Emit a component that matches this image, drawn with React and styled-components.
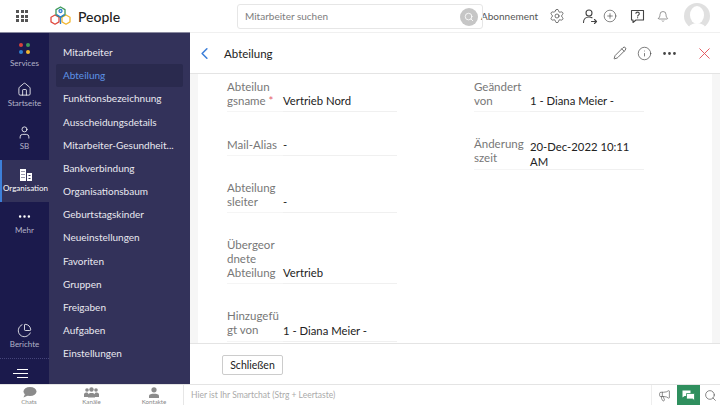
import React from "react";
import styled, { createGlobalStyle } from "styled-components";
import { Home, User, Settings, CirclePlus, Bell, Pencil, Info, Search, X, ChevronLeft, Ellipsis, Megaphone, PieChart } from "lucide-react";

const Global = createGlobalStyle`
  html, body { margin: 0; padding: 0; background: #fff; }
  * { box-sizing: border-box; }
  body { font-family: Lato, "Liberation Sans", sans-serif; }
`;
const Page = styled.div`width:720px;height:405px;display:flex;flex-direction:column;overflow:hidden;background:#fff;`;
const TopBar = styled.header`height:32px;flex:none;display:flex;align-items:center;background:#fff;`;
const GridBtn = styled.div`width:50px;flex:none;display:flex;justify-content:center;padding-right:6px;`;
const GridIcon = styled.div`display:grid;grid-template-columns:repeat(3,3px);grid-auto-rows:3px;gap:1.5px;`;
const GridDot = styled.span`background:#555;`;
const Brand = styled.div`width:187px;flex:none;display:flex;align-items:center;gap:7px;font-size:14px;font-weight:500;color:#222;`;
const SearchBox = styled.div`width:246px;height:25px;flex:none;position:relative;display:flex;align-items:center;padding-left:7px;border:1px solid #e6e6e6;border-radius:3px;font-size:10px;color:#7d7d7d;`;
const SearchDot = styled.span`position:absolute;right:4px;top:3px;width:18px;height:18px;border-radius:50%;background:#c6c6c6;display:flex;align-items:center;justify-content:center;color:#fff;`;
const Sub = styled.span`font-size:10px;color:#555;flex:none;width:56px;margin-left:-2px;white-space:nowrap;`;
const TopIcons = styled.div`display:flex;align-items:center;color:#444;`;
const TopIcon = styled.span`display:flex;flex:none;width:${p=>p.$w}px;justify-content:center;`;
const Avatar = styled.svg`width:26px;height:26px;margin-left:15px;flex:none;`;
const Body = styled.div`flex:1;display:flex;min-height:0;`;
const Rail = styled.nav`width:49px;flex:none;background:#1b1a4c;display:flex;flex-direction:column;box-shadow:inset 0 1px 0 #8a8aa0;`;
const RailItem = styled.div`height:${p=>p.$h||42.5}px;flex:none;display:flex;flex-direction:column;align-items:center;justify-content:center;gap:1px;font-size:8px;padding-top:${p=>p.$pt||0}px;padding-bottom:${p=>p.$pb||0}px;color:${p=>p.$active?"#fff":"#b3b3c8"};background:${p=>p.$active?"#33325a":"transparent"};border-left:${p=>p.$active?"2px solid #3d7fd9":"none"};`;
const RailBottom = styled.div`margin-top:auto;display:flex;flex-direction:column;`;
const Burger = styled.div`height:27px;border-top:1px dotted #45447a;display:flex;flex-direction:column;align-items:flex-end;justify-content:center;gap:2.5px;padding:3px 21px 0 0;`;
const BurgerLine = styled.span`height:1.5px;background:#fff;width:${p=>p.$w}px;`;
const Dots = styled.div`display:grid;grid-template-columns:4px 4px;gap:2.5px;margin-bottom:3px;`;
const Dot = styled.span`width:4px;height:4px;border-radius:50%;background:${p=>p.$c};`;
const Menu = styled.nav`width:141px;flex:none;background:#33325a;padding-top:8.4px;box-shadow:inset 0 1px 0 #8a8aa0;`;
const MenuItem = styled.div`height:23.2px;margin:0 7px;padding:0 0 0 7px;border-radius:2px;display:flex;align-items:center;font-size:10px;white-space:nowrap;color:${p=>p.$active?"#5d93e6":"#e9e9f0"};background:${p=>p.$active?"#2a2a4e":"transparent"};`;
const Main = styled.main`flex:1;display:flex;flex-direction:column;min-width:0;`;
const Head = styled.div`height:42px;flex:none;display:flex;align-items:center;border-bottom:1px solid #e4e4e4;border-top:1px solid #f0f0f0;color:#444;`;
const Back = styled.span`width:28px;flex:none;display:flex;justify-content:center;color:#3d7fd9;margin-right:6px;`;
const Title = styled.div`font-size:11.5px;color:#222;flex:1;`;
const HeadIcon = styled.span`display:flex;flex:none;width:${p=>p.$w}px;justify-content:center;color:#444;`;
const CloseIcon = styled.span`display:flex;flex:none;width:38px;justify-content:flex-end;padding-right:6px;`;
const Content = styled.div`flex:1;min-height:0;overflow:hidden;background:#fff;border-left:8px solid #f6f6f6;border-right:8px solid #f6f6f6;padding:6px 0 0 29px;display:grid;grid-template-columns:247px 1fr;`;
const Col = styled.div`display:flex;flex-direction:column;gap:24.7px;`;
const Row = styled.div`display:flex;align-items:flex-end;`;
const Label = styled.div`width:56px;flex:none;font-size:11.5px;line-height:14.2px;color:#777;padding-bottom:3px;border-bottom:1px solid #f5f5f5;`;
const Value = styled.div`width:114px;flex:none;font-size:11.3px;line-height:15px;color:#222;padding-bottom:${p=>p.$tight?0:3}px;border-bottom:1px solid #f0f0f0;`;
const Req = styled.span`color:#e4606d;`;
const Foot = styled.div`height:42px;flex:none;border-top:1px solid #e4e4e4;display:flex;align-items:center;padding-left:32px;`;
const CloseBtn = styled.button`width:61px;height:20px;padding:0;background:#fff;border:1px solid #ccc;border-radius:2px;font:10.5px Lato,sans-serif;color:#222;`;
const ChatBar = styled.footer`height:20px;flex:none;display:flex;align-items:center;background:#fff;box-shadow:0 -1px 0 #e4e4e4;`;
const Tabs = styled.div`width:184px;flex:none;display:flex;justify-content:center;height:100%;border-right:1px solid #e6e6e6;`;
const Tab = styled.div`width:62.5px;flex:none;display:flex;flex-direction:column;align-items:center;justify-content:flex-end;font-size:6.2px;line-height:7px;color:#888;`;
const TabGlyph = styled.span`display:flex;height:12px;align-items:center;color:#888;`;
const ChatInput = styled.div`flex:1;font-size:8.5px;color:#aaa;padding-left:7px;`;
const Mega = styled.span`display:flex;color:#555;width:26px;justify-content:center;height:100%;align-items:center;border-left:1px solid #eee;`;
const Green = styled.span`width:23px;height:100%;background:#2f8f5e;display:flex;align-items:center;justify-content:center;`;
const MagBtn = styled.span`width:20px;display:flex;justify-content:center;color:#555;`;

const Logo = () => (
  <svg width="21" height="21" viewBox="0 0 21 21" fill="none" strokeWidth="1.3" strokeLinejoin="round">
    <path d="M5 9l4 2.3v4.6l-4 2.3-4-2.3v-4.6z" stroke="#e04a3f" />
    <path d="M16 9l4 2.3v4.6l-4 2.3-4-2.3v-4.6z" stroke="#f2b731" />
    <path d="M10.5 1l4.5 2.6v5.2l-4.5 2.6-4.5-2.6v-5.2z" stroke="#3f9a5a" />
    <circle cx="10.5" cy="5" r="1.5" stroke="#2f7fd1" />
    <path d="M6.5 8.5l4 2.5 4-2.5M10.5 11v7" stroke="#2f7fd1" />
  </svg>
);
const UserArrow = () => (
  <svg width="16" height="15" viewBox="0 0 16 15" fill="none" stroke="#444" strokeWidth="1.1" strokeLinecap="round" strokeLinejoin="round">
    <circle cx="7" cy="4" r="3" />
    <path d="M1.5 13.5c0-3.500 2.500-5.500 5.500-5.500 1.200 0 2.200.3 3 .8" />
    <path d="M9.500 12.500h5M12.500 10.500l2 2-2 2" />
  </svg>
);
const OrgIcon = () => (
  <svg width="14" height="14" viewBox="0 0 14 14" fill="#fff">
    <path d="M1 1h6v12H1zM8 5h5v8H8z" />
    <path d="M2.5 3h1v1h-1zM4.5 3h1v1h-1zM2.5 6h1v1h-1zM4.5 6h1v1h-1zM2.5 9h1v1h-1zM4.5 9h1v1h-1zM9.5 7h2v1h-2zM9.5 10h2v1h-2z" fill="#33325a" />
  </svg>
);
const Help = () => (
  <svg width="15" height="15" viewBox="0 0 15 15" fill="none" stroke="#444" strokeWidth="1.1">
    <path d="M1.5 1.5h12v9.5H6l-3 2.5V11H1.5z" strokeLinejoin="round" />
    <path d="M5.8 4.8c0-2.2 3.5-2.2 3.5 0 0 1.3-1.7 1.3-1.7 2.6M7.600 8.300v1" />
  </svg>
);
const ChatGlyph = () => (
  <svg width="15" height="11" viewBox="0 0 15 11" fill="#8b8b8b"><ellipse cx="8" cy="4.5" rx="6.5" ry="4.5" /><path d="M3 7L1.5 10.5 6 8.5z" /></svg>
);
const TeamGlyph = () => (
  <svg width="15" height="11" viewBox="0 0 15 11" fill="#8b8b8b"><circle cx="3" cy="3" r="1.8" /><circle cx="12" cy="3" r="1.8" /><circle cx="7.5" cy="2.5" r="2.2" /><path d="M0 10V7c0-1.5 4-2 4-1v4zM15 10V7c0-1.500-4-2-4-1v4zM4 10.500V7.500c0-2 7-2 7 0v3z" /></svg>
);
const PersonGlyph = () => (
  <svg width="12" height="11" viewBox="0 0 12 11" fill="#8b8b8b"><circle cx="6" cy="2.8" r="2.6" /><path d="M1 11V8.5c0-2.5 10-2.5 10 0V11z" /></svg>
);
const Threads = () => (
  <svg width="13" height="11" viewBox="0 0 13 11" fill="#fff"><path d="M0.5 0.5h8v5.5h-6l-2 1.5z" /><path d="M4.5 3.5h8v7l-2-1.500h-6z" stroke="#2f8f5e" strokeWidth=".8" /></svg>
);

const menu = ["Mitarbeiter","Abteilung","Funktionsbezeichnung","Ausscheidungsdetails","Mitarbeiter-Gesundheit...","Bankverbindung","Organisationsbaum","Geburtstagskinder","Neueinstellungen","Favoriten","Gruppen","Freigaben","Aufgaben","Einstellungen"];

export default function App() {
  return (
    <Page>
      <Global />
      <TopBar>
        <GridBtn><GridIcon>{Array.from({length:9}).map((_,i)=><GridDot key={i}/>)}</GridIcon></GridBtn>
        <Brand><Logo />People</Brand>
        <SearchBox>Mitarbeiter suchen<SearchDot><Search size={10} strokeWidth={2} /></SearchDot></SearchBox>
        <Sub>Abonnement</Sub>
        <TopIcons>
          <TopIcon $w={40}><Settings size={16} strokeWidth={1.1} /></TopIcon>
          <TopIcon $w={26}><UserArrow /></TopIcon>
          <TopIcon $w={14}><CirclePlus size={14} strokeWidth={1.1} /></TopIcon>
          <TopIcon $w={40}><Help /></TopIcon>
          <TopIcon $w={12}><Bell size={15} strokeWidth={1.1} /></TopIcon>
        </TopIcons>
        <Avatar viewBox="0 0 26 26">
          <circle cx="13" cy="13" r="13" fill="#e0e0e0" />
          <ellipse cx="13" cy="12" rx="7" ry="9" fill="#fff" />
          <path d="M5 24c2-5 14-5 16 0-4 3-12 3-16 0z" fill="#fff" />
        </Avatar>
      </TopBar>
      <Body>
        <Rail>
          <RailItem $pt={4}><Dots><Dot $c="#d8413b" /><Dot $c="#3f9a5a" /><Dot $c="#2f7fd1" /><Dot $c="#f2b731" /></Dots>Services</RailItem>
          <RailItem $pb={1}><Home size={15} color="#fff" strokeWidth={1.3} />Startseite</RailItem>
          <RailItem><User size={15} color="#fff" strokeWidth={1.3} />SB</RailItem>
          <RailItem $active><OrgIcon />Organisation</RailItem>
          <RailItem $pb={3}><Ellipsis size={15} color="#fff" />Mehr</RailItem>
          <RailBottom>
            <RailItem $h={40} $pb={5}><PieChart size={15} color="#fff" strokeWidth={1.3} />Berichte</RailItem>
            <Burger><BurgerLine $w={11} /><BurgerLine $w={15} /><BurgerLine $w={11} /></Burger>
          </RailBottom>
        </Rail>
        <Menu>{menu.map((m,i)=><MenuItem key={m} $active={i===1}>{m}</MenuItem>)}</Menu>
        <Main>
          <Head>
            <Back><ChevronLeft size={19} strokeWidth={2} /></Back>
            <Title>Abteilung</Title>
            <HeadIcon $w={24}><Pencil size={14} strokeWidth={1.3} /></HeadIcon>
            <HeadIcon $w={24}><Info size={15} strokeWidth={1.1} /></HeadIcon>
            <HeadIcon $w={26}><Ellipsis size={17} strokeWidth={2} /></HeadIcon>
            <CloseIcon><X size={19} strokeWidth={1.2} color="#e4555d" /></CloseIcon>
          </Head>
          <Content>
            <Col>
              <Row><Label>Abteilun<br />gsname <Req>*</Req></Label><Value>Vertrieb Nord</Value></Row>
              <Row><Label>Mail-Alias</Label><Value>-</Value></Row>
              <Row><Label>Abteilung<br />sleiter</Label><Value>-</Value></Row>
              <Row><Label>Übergeor<br />dnete<br />Abteilung</Label><Value>Vertrieb</Value></Row>
              <Row><Label>Hinzugefü<br />gt von</Label><Value>1 - Diana Meier -</Value></Row>
            </Col>
            <Col>
              <Row><Label>Geändert<br />von</Label><Value>1 - Diana Meier -</Value></Row>
              <Row><Label>Änderung<br />szeit</Label><Value $tight>20-Dec-2022 10:11 AM</Value></Row>
            </Col>
          </Content>
          <Foot><CloseBtn>Schließen</CloseBtn></Foot>
        </Main>
      </Body>
      <ChatBar>
        <Tabs>
          <Tab><TabGlyph><ChatGlyph /></TabGlyph>Chats</Tab>
          <Tab><TabGlyph><TeamGlyph /></TabGlyph>Kanäle</Tab>
          <Tab><TabGlyph><PersonGlyph /></TabGlyph>Kontakte</Tab>
        </Tabs>
        <ChatInput>Hier ist Ihr Smartchat (Strg + Leertaste)</ChatInput>
        <Mega><Megaphone size={13} strokeWidth={1.2} /></Mega>
        <Green><Threads /></Green>
        <MagBtn><Search size={13} strokeWidth={1.3} /></MagBtn>
      </ChatBar>
    </Page>
  );
}
